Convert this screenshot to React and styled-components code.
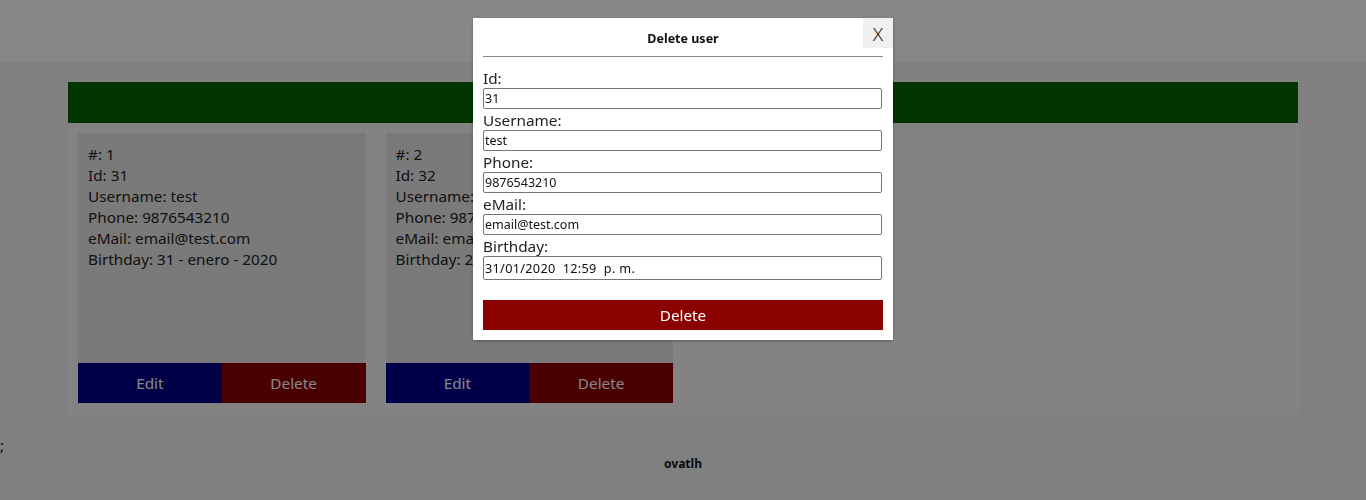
import React from "react";
import styled, { createGlobalStyle } from "styled-components";

const GlobalStyle = createGlobalStyle`
  html, body { margin: 0; padding: 0; }
  body {
    background: #f2f2f2;
    font-family: "Noto Sans", "Open Sans", sans-serif;
    color: #111;
  }
`;

const TopBar = styled.header`
  height: 62px;
  background: #ffffff;
`;

const Main = styled.main`
  padding: 20px 68px 0;
`;

const Panel = styled.section`
  background: #f7f7f7;
  box-shadow: 0 0 0 1px #fafafa;
`;

const GreenBar = styled.div`
  height: 41px;
  background: #006400;
`;

const CardRow = styled.div`
  display: flex;
  gap: 20px;
  padding: 10px;
`;

const Card = styled.article`
  width: 287.5px;
  height: 270px;
  display: flex;
  flex-direction: column;
  background: #e6e6e6;
`;

const CardBody = styled.div`
  flex: 1;
  padding: 11px 10px 9px;
  font-size: 15.3px;
  line-height: 21px;
  color: #222;
`;

const Line = styled.div`
  white-space: nowrap;
  overflow: hidden;
`;

const CardActions = styled.div`
  display: grid;
  grid-template-columns: 1fr 1fr;
  height: 40px;
`;

const ActionButton = styled.button`
  border: none;
  margin: 0;
  font-family: inherit;
  font-size: 15.3px;
  color: #ffffff;
  background: ${(p) => (p.$variant === "edit" ? "#00008b" : "#8b0000")};
`;

const Semi = styled.div`
  margin-top: 22px;
  font-size: 15px;
  line-height: 21px;
`;

const Footer = styled.footer`
  text-align: center;
  font-size: 12px;
  font-weight: bold;
  line-height: 16px;
  padding-bottom: 20px;
`;

const Overlay = styled.div`
  position: fixed;
  inset: 0;
  background: rgba(0, 0, 0, 0.47);
`;

const Modal = styled.div`
  position: fixed;
  top: 18px;
  left: 473px;
  width: 400px;
  padding: 10px;
  background: #ffffff;
  box-shadow: 0 1px 3px rgba(0, 0, 0, 0.3);
`;

const ModalTitle = styled.h2`
  margin: 0;
  padding-top: 2px;
  text-align: center;
  font-size: 12.5px;
  line-height: 18px;
  font-weight: bold;
  color: #111;
`;

const CloseButton = styled.button`
  position: absolute;
  top: 0;
  right: 0;
  width: 30px;
  height: 30px;
  border: none;
  padding: 0;
  background: #f0f0f0;
  font-family: "Noto Sans", sans-serif;
  font-size: 19px;
  font-weight: 300;
  color: #222;
  line-height: 32px;
`;

const Rule = styled.hr`
  margin: 8px 0 10px;
  border: none;
  border-top: 1px solid #8a8a8a;
`;

const Field = styled.div`
  display: flex;
  flex-direction: column;
`;

const LabelText = styled.label`
  display: block;
  height: 21px;
  font-size: 15.3px;
  line-height: 22px;
  color: #222;
`;

const TextInput = styled.input`
  box-sizing: border-box;
  width: 399px;
  height: ${(p) => (p.$tall ? "24px" : "21px")};
  margin: 0;
  padding: 0 1px;
  border: 1px solid #767676;
  border-radius: 2px;
  font-family: "Noto Sans", sans-serif;
  font-size: ${(p) => (p.$tall ? "12.7px" : "12.5px")};
  letter-spacing: ${(p) => (p.$tall ? "0.3px" : "0")};
  color: #111;
  background: #fff;
  outline: none;
`;

const SubmitButton = styled.button`
  display: block;
  width: 400px;
  height: 30px;
  margin-top: 20px;
  border: none;
  background: #8b0000;
  color: #ffffff;
  font-family: "Noto Sans", sans-serif;
  font-size: 15.3px;
`;

const users = [
  { n: 1, id: 31, username: "test", phone: "9876543210", email: "email@test.com", birthday: "31 - enero - 2020" },
  { n: 2, id: 32, username: "test2", phone: "9876543210", email: "email@test.com", birthday: "22 - enero - 2020" },
];

const fields = [
  { key: "id", label: "Id:", value: "31" },
  { key: "username", label: "Username:", value: "test" },
  { key: "phone", label: "Phone:", value: "9876543210" },
  { key: "email", label: "eMail:", value: "email@test.com" },
  { key: "birthday", label: "Birthday:", value: "31/01/2020  12:59  p. m.", tall: true },
];

export default function App() {
  return (
    <>
      <GlobalStyle />
      <TopBar />
      <Main>
        <Panel>
          <GreenBar />
          <CardRow>
            {users.map((u) => (
              <Card key={u.n}>
                <CardBody>
                  <Line>#: {u.n}</Line>
                  <Line>Id: {u.id}</Line>
                  <Line>Username: {u.username}</Line>
                  <Line>Phone: {u.phone}</Line>
                  <Line>eMail: {u.email}</Line>
                  <Line>Birthday: {u.birthday}</Line>
                </CardBody>
                <CardActions>
                  <ActionButton $variant="edit">Edit</ActionButton>
                  <ActionButton $variant="delete">Delete</ActionButton>
                </CardActions>
              </Card>
            ))}
          </CardRow>
        </Panel>
      </Main>
      <Semi>;</Semi>
      <Footer>ovatlh</Footer>
      <Overlay />
      <Modal>
        <CloseButton>X</CloseButton>
        <ModalTitle>Delete user</ModalTitle>
        <Rule />
        {fields.map((f) => (
          <Field key={f.key}>
            <LabelText htmlFor={f.key}>{f.label}</LabelText>
            <TextInput id={f.key} $tall={f.tall} readOnly value={f.value} />
          </Field>
        ))}
        <SubmitButton>Delete</SubmitButton>
      </Modal>
    </>
  );
}
